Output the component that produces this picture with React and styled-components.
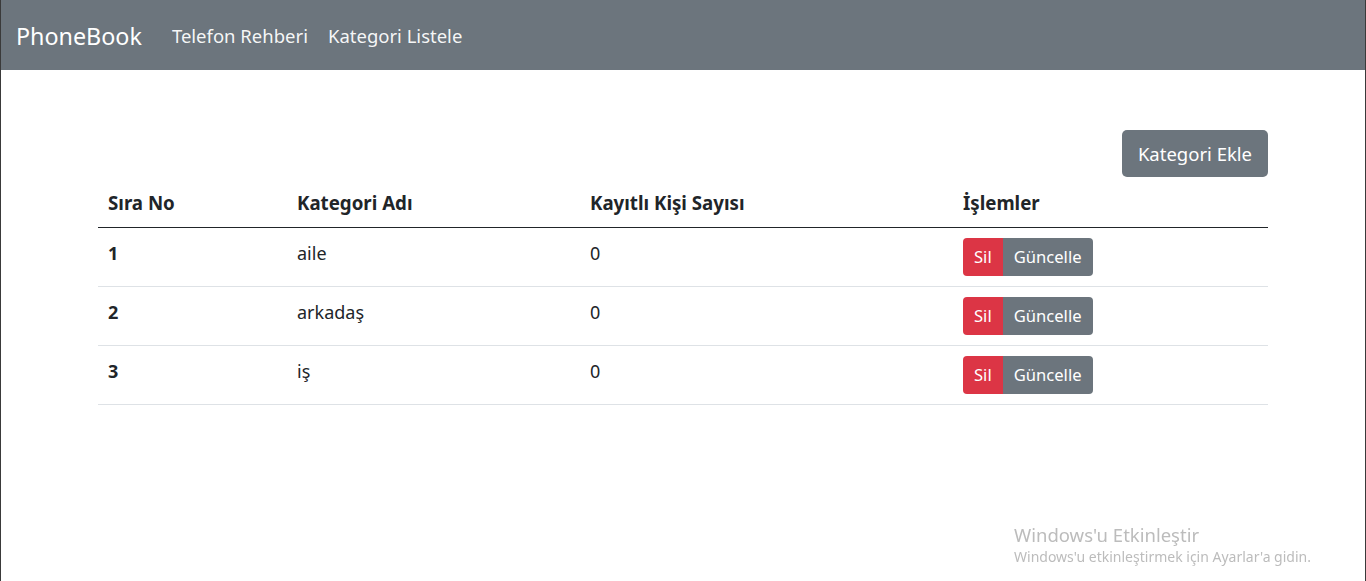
import React from "react";
import styled, { createGlobalStyle } from "styled-components";

const GlobalStyle = createGlobalStyle`
  * {
    box-sizing: border-box;
  }
  html, body {
    margin: 0;
    height: 100%;
  }
  body {
    font-family: "Noto Sans", "Open Sans", sans-serif;
    color: #212529;
    background: #ffffff;
    border-left: 1px solid #3a3a3a;
    border-right: 1px solid #3a3a3a;
  }
`;

const categories = [
  { id: 1, name: "aile", count: 0 },
  { id: 2, name: "arkadaş", count: 0 },
  { id: 3, name: "iş", count: 0 },
];

const App = () => {
  return (
    <>
      <GlobalStyle />
      <Navbar>
        <Brand href="#">PhoneBook</Brand>
        <NavList>
          <NavLink href="#">Telefon Rehberi</NavLink>
          <NavLink href="#">Kategori Listele</NavLink>
        </NavList>
      </Navbar>
      <Container>
        <Actions>
          <AddButton>Kategori Ekle</AddButton>
        </Actions>
        <Table>
          <colgroup>
            <col style={{ width: 189 }} />
            <col style={{ width: 293 }} />
            <col style={{ width: 373 }} />
            <col />
          </colgroup>
          <thead>
            <tr>
              <Th>Sıra No</Th>
              <Th>Kategori Adı</Th>
              <Th>Kayıtlı Kişi Sayısı</Th>
              <Th>İşlemler</Th>
            </tr>
          </thead>
          <tbody>
            {categories.map((c) => (
              <tr key={c.id}>
                <Td $bold>{c.id}</Td>
                <Td>{c.name}</Td>
                <Td>{c.count}</Td>
                <ActionCell>
                  <BtnGroup>
                    <SmallButton $variant="danger">Sil</SmallButton>
                    <SmallButton $variant="secondary">Güncelle</SmallButton>
                  </BtnGroup>
                </ActionCell>
              </tr>
            ))}
          </tbody>
        </Table>
      </Container>
      <Watermark>
        <WatermarkTitle>Windows'u Etkinleştir</WatermarkTitle>
        <WatermarkText>Windows'u etkinleştirmek için Ayarlar'a gidin.</WatermarkText>
      </Watermark>
    </>
  );
};

const Navbar = styled.nav`
  height: 70px;
  background: #6c757d;
  display: flex;
  align-items: center;
  padding: 1px 15px 0;
`;

const Brand = styled.a`
  color: #ffffff;
  font-size: 23.3px;
  text-decoration: none;
  margin-right: 20px;
`;

const NavList = styled.div`
  display: flex;
  align-items: center;
`;

const NavLink = styled.a`
  color: rgba(255, 255, 255, 0.95);
  font-size: 18.5px;
  text-decoration: none;
  padding: 0 10px;
`;

const Container = styled.main`
  width: 1170px;
  margin: 0 auto;
  padding-top: 60px;
`;

const Actions = styled.div`
  display: flex;
  justify-content: flex-end;
  margin-bottom: 2px;
`;

const AddButton = styled.button`
  height: 47px;
  padding: 0 16px;
  border: none;
  border-radius: 5px;
  background: #6c757d;
  color: #ffffff;
  font-family: inherit;
  font-size: 18.5px;
`;

const Table = styled.table`
  width: 100%;
  border-collapse: collapse;
  table-layout: fixed;
`;

const Th = styled.th`
  height: 48px;
  padding: 0 10px;
  text-align: left;
  font-size: 18.7px;
  font-weight: 700;
  border-bottom: 1px solid #212529;
`;

const Td = styled.td`
  padding: 12px 10px 10px;
  font-size: 18px;
  line-height: 27px;
  font-weight: ${(p) => (p.$bold ? 700 : 400)};
  border-bottom: 1px solid #dee2e6;
  vertical-align: top;
`;

const ActionCell = styled(Td)`
  padding: 10px 10px 10px;
`;

const BtnGroup = styled.div`
  display: inline-flex;
  vertical-align: top;
`;

const SmallButton = styled.button`
  height: 38px;
  padding: 0 11px;
  border: none;
  font-family: inherit;
  font-size: 16.6px;
  color: #ffffff;
  background: ${(p) => (p.$variant === "danger" ? "#dc3545" : "#6c757d")};
  border-radius: ${(p) => (p.$variant === "danger" ? "4px 0 0 4px" : "0 4px 4px 0")};
`;

const Watermark = styled.div`
  position: fixed;
  left: 1014px;
  top: 522px;
  color: #bcbcbc;
  pointer-events: none;
`;

const WatermarkTitle = styled.div`
  font-size: 18.5px;
  line-height: 26px;
`;

const WatermarkText = styled.div`
  font-size: 14px;
  line-height: 18px;
`;

export default App;
